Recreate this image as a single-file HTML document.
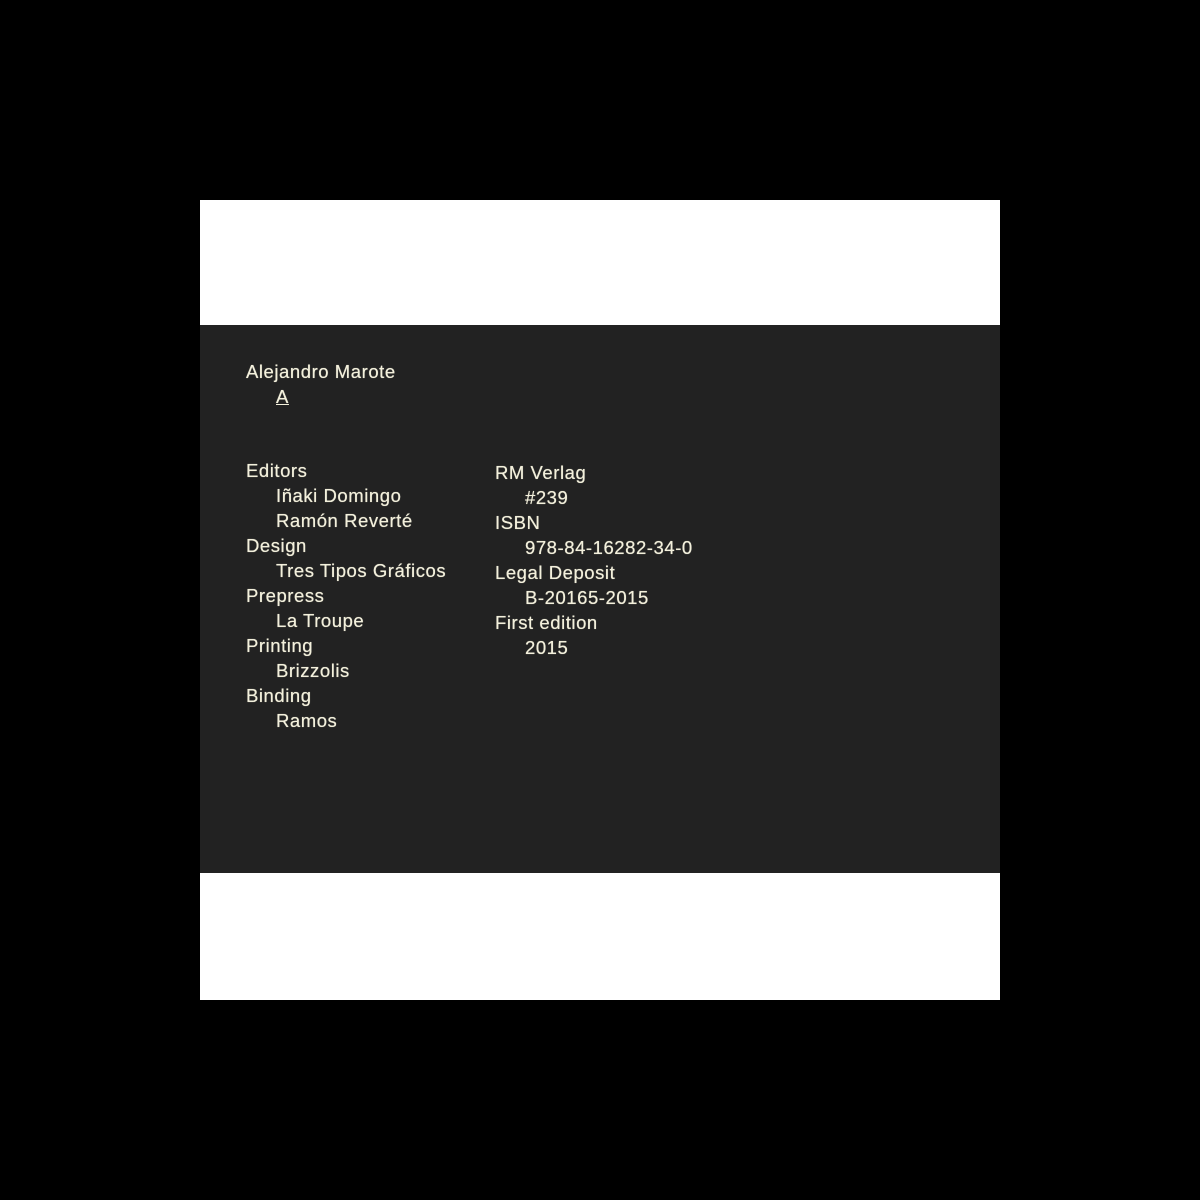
<!DOCTYPE html>
<html><head><style>
body{margin:0;background:#000;width:1200px;height:1200px;position:relative;overflow:hidden}
.w{position:absolute;left:200px;top:200px;width:800px;height:800px;background:#fff}
.d{position:absolute;left:200px;top:325px;width:800px;height:548px;background:#222222}
.c{position:absolute;font-family:"Liberation Sans",sans-serif;font-size:18.5px;letter-spacing:0.55px;line-height:25px;color:#f3f0dc;white-space:pre;text-shadow:0 0 0.6px #f3f0dc}
.i{padding-left:30px}
</style></head><body>
<div class="w"></div><div class="d"></div>
<div class="c" style="left:246px;top:359px">Alejandro Marote
<span class="i" style="text-decoration:underline">A</span></div>
<div class="c" style="left:246px;top:458px"><div>Editors</div><div class="i">Iñaki Domingo</div><div class="i">Ramón Reverté</div><div>Design</div><div class="i">Tres Tipos Gráficos</div><div>Prepress</div><div class="i">La Troupe</div><div>Printing</div><div class="i">Brizzolis</div><div>Binding</div><div class="i">Ramos</div></div>
<div class="c" style="left:495px;top:460px"><div>RM Verlag</div><div class="i">#239</div><div>ISBN</div><div class="i">978-84-16282-34-0</div><div>Legal Deposit</div><div class="i">B-20165-2015</div><div>First edition</div><div class="i">2015</div></div>
</body></html>
